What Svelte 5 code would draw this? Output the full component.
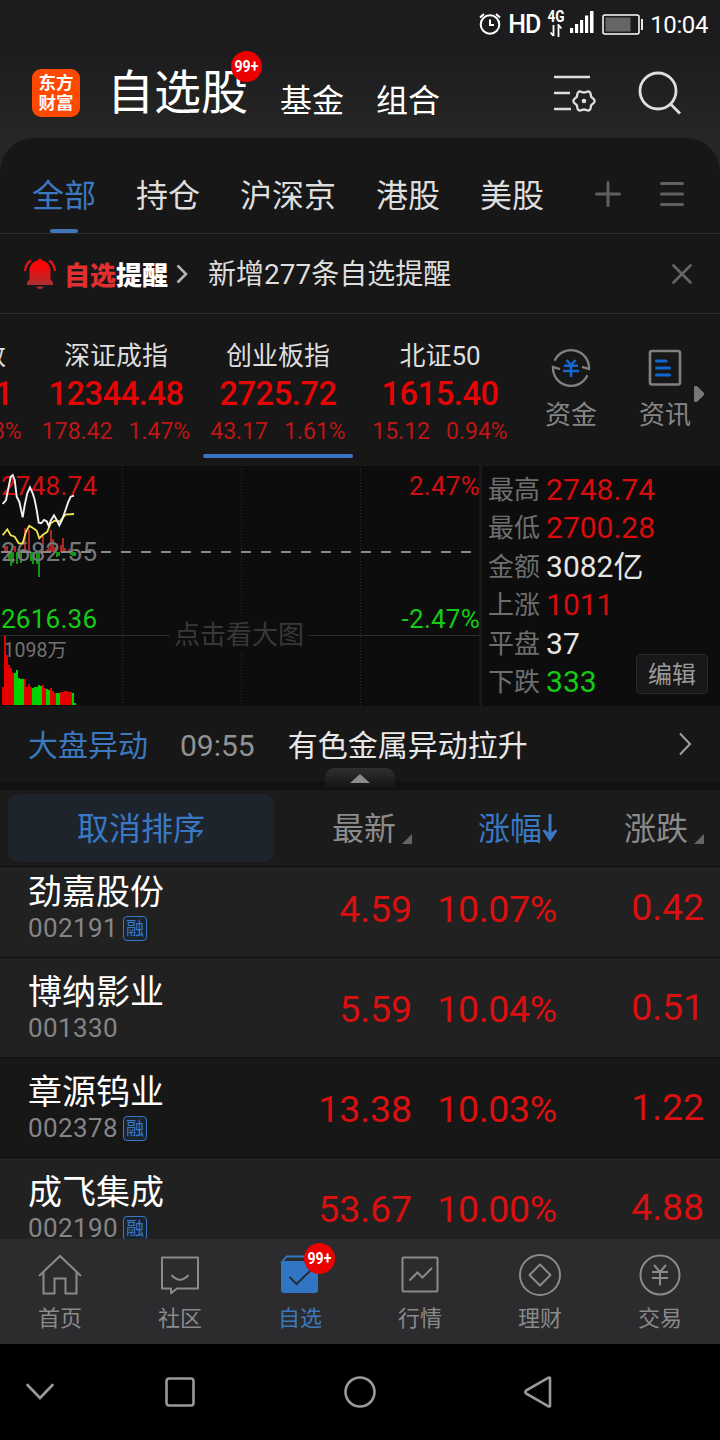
<script>
  const groups = ["全部", "持仓", "沪深京", "港股", "美股"];
  let activeGroup = "全部";

  const indices = [
    { name: "上证指数", value: "3382.41", diff: "33.17", pct: "0.98%" },
    { name: "深证成指", value: "12344.48", diff: "178.42", pct: "1.47%" },
    { name: "创业板指", value: "2725.72", diff: "43.17", pct: "1.61%", active: true },
    { name: "北证50", value: "1615.40", diff: "15.12", pct: "0.94%" },
  ];

  const stats = [
    { label: "最高", value: "2748.74", tone: "up" },
    { label: "最低", value: "2700.28", tone: "up" },
    { label: "金额", value: "3082亿", tone: "" },
    { label: "上涨", value: "1011", tone: "up" },
    { label: "平盘", value: "37", tone: "" },
    { label: "下跌", value: "333", tone: "down" },
  ];

  const stocks = [
    { name: "劲嘉股份", code: "002191", margin: true, price: "4.59", pct: "10.07%", diff: "0.42" },
    { name: "博纳影业", code: "001330", margin: false, price: "5.59", pct: "10.04%", diff: "0.51" },
    { name: "章源钨业", code: "002378", margin: true, price: "13.38", pct: "10.03%", diff: "1.22", dark: true },
    { name: "成飞集成", code: "002190", margin: true, price: "53.67", pct: "10.00%", diff: "4.88" },
  ];

  const tabs = [
    { id: "home", label: "首页" },
    { id: "community", label: "社区" },
    { id: "watch", label: "自选" },
    { id: "market", label: "行情" },
    { id: "wealth", label: "理财" },
    { id: "trade", label: "交易" },
  ];
  let activeTab = "watch";

  // six-lobed gear outline
  const gear = Array.from({ length: 72 }, (_, i) => {
    const a = (i * Math.PI) / 36;
    const r = 9.5 + 1.1 * Math.cos(6 * a);
    return `${(31 + r * Math.cos(a)).toFixed(2)},${(30 + r * Math.sin(a)).toFixed(2)}`;
  }).join(" ");

  // runs of [colour, heights...], one bar every 2px
  const volumeRuns = [
    ["r", 18, 69, 50, 40, 37, 32],
    ["g", 32, 35, 27, 26, 26],
    ["r", 26, 18, 21, 18],
    ["g", 17, 18, 18, 20, 19],
    ["r", 20, 17],
    ["g", 16, 15],
    ["r", 17, 14, 12],
    ["g", 12, 12],
    ["r", 13, 13, 14, 14, 13, 13],
    ["g", 12, 2],
  ];
  const volume = volumeRuns.flatMap(([c, ...hs]) => hs.map((h) => ({ c, h })));

  // [x, height], negative goes below the zero line
  const momentum = [
    [4, 6], [6, 6], [8, -8], [10, -14], [12, -11], [14, 6], [16, -12], [20, -11],
    [24, 24], [28, 22], [30, -9], [32, -12], [36, -12], [38, -25], [42, 16],
    [46, 3], [48, 4], [50, 22], [52, 13], [54, 5], [56, -5], [58, -4], [60, 7],
    [62, 14], [64, 4], [68, 3], [70, -3], [72, -4], [74, -4],
  ];

  const priceLine =
    "2.7,38 6,34 8,24 10.7,10.7 12.7,9 14.7,14 16.7,30.7 19.3,35.7 22.7,51.3 24.7,39 27.3,27.3 30,21.3 32.7,27.3 34.7,34 36.7,44 38.7,56.7 41.3,57.3 44,54 46.7,55.3 48.7,60 50.7,54.7 54,49.3 56.7,54 59.3,59.3 62,54 65.3,44.7 68,36.7 70.7,30.7 74,29.7";
  const avgLine =
    "2.7,69.3 7.3,63.3 10.7,69.3 14.7,70.7 18.7,77.3 22.7,77.3 26,65.7 29.3,59.7 33.3,62.3 36.7,64.7 39.3,72.3 42.7,69 47.3,65.7 50.7,57.3 54.7,54.7 60,55.3 65.3,48.7 74,48";
</script>

<div class="phone">
  <div class="top">
    <div class="status">
      <svg width="24" height="24" viewBox="0 0 24 24" fill="none" stroke="#fff" stroke-width="2">
        <circle cx="12" cy="12.5" r="9.3" />
        <path d="M12 7.5v5.5h4M2 5.5l4-3.5M22 5.5l-4-3.5" />
      </svg>
      <span class="hd">HD</span>
      <div class="net">
        <span>4G</span>
        <svg width="14" height="13" viewBox="0 0 14 13" fill="none" stroke="#fff" stroke-width="1.8">
          <path d="M4.5 1v11M4.5 12l-3-3.5M9.5 13V1l3 3.5" />
        </svg>
      </div>
      <svg class="signal" width="24" height="22" viewBox="0 0 24 22" fill="#fff">
        <path d="M0 17h3.2v5H0zM5 13h3.2v9H5zM10 9h3.2v13H10zM15 4.500h3.200V22H15zM20 0h3.500v22H20z" />
      </svg>
      <svg class="battery" width="42" height="22" viewBox="0 0 42 22">
        <rect x="1" y="1" width="36" height="19" rx="2" fill="none" stroke="#fff" stroke-width="1.5" />
        <rect x="3.500" y="3.500" width="25" height="14" fill="#666" />
        <path d="M40 5v11" stroke="#fff" stroke-width="1.800" />
      </svg>
      <span class="clock">10:04</span>
    </div>

    <header>
      <div class="logo"><span>东方</span><span>财富</span></div>
      <h1>自选股<span class="count"><i>99+</i></span></h1>
      <span class="link">基金</span>
      <span class="link">组合</span>
      <svg class="manage" width="44" height="44" viewBox="0 0 44 44" fill="none" stroke="#dedede" stroke-width="2.6">
        <path d="M1 6h36M1 22h16M1 38h17" />
        <polygon points={gear} stroke-width="2.3" />
        <circle cx="31" cy="30" r="2.300" fill="#dedede" stroke="none" />
      </svg>
      <svg class="search" width="46" height="46" viewBox="0 0 46 46" fill="none" stroke="#dedede" stroke-width="2.800">
        <circle cx="21" cy="21" r="18" />
        <path d="M33.500 34l9.500 9.500" />
      </svg>
    </header>
  </div>

  <div class="groups-wrap">
    <nav class="groups">
      {#each groups as group}
        <span class="group" class:active={group === activeGroup}>{group}</span>
      {/each}
      <svg class="plus" width="26" height="26" viewBox="0 0 26 26" stroke="#606060" stroke-width="3" stroke-linecap="round">
        <path d="M13 1.500v23M1.500 13h23" />
      </svg>
      <svg class="menu" width="24" height="26" viewBox="0 0 24 26" stroke="#606060" stroke-width="3" stroke-linecap="round">
        <path d="M1.500 2.500h21M1.500 13h21M1.500 23.500h21" />
      </svg>
    </nav>
  </div>

  <div class="notice">
    <svg width="34" height="32" viewBox="0 0 34 32">
      <defs>
        <linearGradient id="bell" x1="0" y1="0" x2="0" y2="1">
          <stop offset="0.3" stop-color="#f90808" />
          <stop offset="1" stop-color="#a93030" />
        </linearGradient>
      </defs>
      <path fill="url(#bell)" d="M17 1c1.500 0 2.200.6 2.500 1.600C24.500 3.700 27.500 8 27.500 13v8l2.500 3.500V27H4v-2.500L6.500 21v-8c0-5 3-9.300 8-10.400C14.800 1.600 15.500 1 17 1z" />
      <path fill="#a93030" d="M13.500 28.500h7c-.5 1.700-1.700 2.500-3.500 2.500s-3-.8-3.500-2.500z" />
      <path fill="none" stroke="#e81212" stroke-width="2.200" d="M2 13c.3-4.500 2-8 6-10.500M32 13c-.3-4.500-2-8-6-10.500" />
    </svg>
    <b><em>自选</em>提醒</b>
    <svg class="go" width="12" height="20" viewBox="0 0 12 20" fill="none" stroke="#b5b5b5" stroke-width="2.500">
      <path d="M1.500 1.500L10 10l-8.500 8.500" />
    </svg>
    <span>新增277条自选提醒</span>
    <svg class="close" width="20" height="20" viewBox="0 0 20 20" stroke="#666" stroke-width="2.600" stroke-linecap="round">
      <path d="M1.500 1.500l17 17M18.500 1.500l-17 17" />
    </svg>
  </div>

  <section class="board">
    <div class="indices">
      {#each indices as item}
        <div class="index" class:active={item.active}>
          <span class="name">{item.name}</span>
          <span class="value">{item.value}</span>
          <span class="change"><span>{item.diff}</span><span>{item.pct}</span></span>
        </div>
      {/each}
    </div>
    <div class="tool">
      <svg width="40" height="40" viewBox="0 0 40 40" fill="none" stroke="#808080" stroke-width="2.300">
        <path d="M3.600 12.700A18 18 0 0 1 38 21L31 18.800" />
        <path d="M36.400 27.300A18 18 0 0 1 2 19L9 21.200" />
        <path stroke="#1169d0" stroke-width="2.600" d="M15.500 12l4.500 5 4.500-5M13 17.800h14M12 23h16M20 17v12" />
      </svg>
      <span>资金</span>
    </div>
    <div class="tool">
      <svg width="40" height="40" viewBox="0 0 40 40" fill="none" stroke="#808080" stroke-width="2.600">
        <rect x="5" y="3" width="30" height="33.500" rx="2" />
        <path stroke="#1169d0" stroke-width="3" stroke-linecap="round" d="M11.500 13h9.500M11.500 20h13M11.500 27h13" />
      </svg>
      <span>资讯</span>
    </div>
    <svg class="more" width="10" height="16" viewBox="0 0 10 16"><path fill="#777" d="M0 1q0-1 1-1h2l7 7v2l-7 7H1q-1 0-1-1z" /></svg>
  </section>

  <section class="quote">
    <svg class="chart" width="479" height="240" viewBox="0 0 479 240">
      <g class="grid">
        <path d="M122.500 2v238M241.500 2v150M241.500 186v54M360.500 2v238" stroke-dasharray="1 2" />
        <path d="M1 169.500h169M308 169.500h171" />
      </g>
      {#each momentum as [x, h]}
        <rect x={x} y={h > 0 ? 86 - h : 86} width="2" height={Math.abs(h)} fill={h > 0 ? "#a82828" : "#159415"} />
      {/each}
      <g class="figures">
        <text class="up" x="1" y="29">2748.74</text>
        <text class="mid" x="1" y="95">2682.55</text>
        <text class="down" x="1" y="162">2616.36</text>
        <text class="up" x="480" y="29" text-anchor="end">2.47%</text>
        <text class="down" x="480" y="162" text-anchor="end">-2.47%</text>
        <text class="vol" x="3.500" y="190.500">1098万</text>
        <text class="hint" x="174" y="178">点击看大图</text>
      </g>
      <path d="M1 86h472" stroke="#8a8a8a" stroke-width="2" stroke-dasharray="10 10" />
      {#each volume as bar, i}
        <rect x={2 + i * 2} y={239 - bar.h} width="2" height={bar.h} fill={bar.c === "r" ? "#e60000" : "#00d400"} />
      {/each}
      <polyline points={avgLine} fill="none" stroke="#f2e34c" stroke-width="1.800" />
      <polyline points={priceLine} fill="none" stroke="#f2f2f2" stroke-width="1.900" />
    </svg>
    <div class="stats">
      {#each stats as row}
        <div class="stat"><span>{row.label}</span><strong class={row.tone}>{row.value}</strong></div>
      {/each}
      <button class="edit">编辑</button>
    </div>
  </section>

  <div class="flash">
    <span class="tag">大盘异动</span>
    <span class="time">09:55</span>
    <span class="text">有色金属异动拉升</span>
    <svg width="14" height="24" viewBox="0 0 14 24" fill="none" stroke="#a0a0a0" stroke-width="2">
      <path d="M2 1.500L12 12 2 22.500" />
    </svg>
    <div class="handle">
      <svg width="20" height="9" viewBox="0 0 20 9"><path fill="#8c8c8c" d="M10 0l10 9H0z" /></svg>
    </div>
  </div>

  <div class="sort">
    <span class="cancel">取消排序</span>
    <span class="col c1">最新<i class="corner"></i></span>
    <span class="col c2">涨幅<svg width="16" height="28" viewBox="0 0 16 28"><path fill="none" stroke="#3a78c3" stroke-width="3" d="M8 0v24" /><path fill="#3a78c3" d="M0.500 16.500l2-1 5.500 4 5.500-4 2 1L8 28z" /></svg></span>
    <span class="col c3">涨跌<i class="corner"></i></span>
  </div>

  <div class="list">
    {#each stocks as stock}
      <div class="stock" class:dark={stock.dark}>
        <div class="who">
          <span class="title">{stock.name}</span>
          <span class="code">{stock.code}{#if stock.margin}<i>融</i>{/if}</span>
        </div>
        <span class="num price">{stock.price}</span>
        <span class="num pct">{stock.pct}</span>
        <span class="num diff">{stock.diff}</span>
      </div>
    {/each}
  </div>

  <nav class="tabbar">
    {#each tabs as tab}
      <div class="tab" class:active={tab.id === activeTab}>
        <svg width="46" height="44" viewBox="0 0 46 44" fill="none" stroke="#8a8a8a" stroke-width="2">
          {#if tab.id === "home"}
            <path d="M2 23L23 3l21 20M6.500 19v21.500h11V25.500h11v15h11V19" />
          {:else if tab.id === "community"}
            <path d="M5 4.500h36v31H20l-6 4.800v-4.800H5zM14.500 22q8.500 9.500 17 0" stroke-linejoin="round" />
          {:else if tab.id === "watch"}
            <path d="M9.500 3.500h26L39 9H5z" stroke="#3176c2" stroke-width="1.800" />
            <rect x="4" y="8.500" width="37" height="31.500" rx="3" fill="#3176c2" stroke="none" />
            <path d="M12.500 24l7 7L34 17" stroke="#252d38" />
          {:else if tab.id === "market"}
            <rect x="5.500" y="4.500" width="35" height="34" rx="1" />
            <path d="M12.500 27.500l8-8 5 5 9.500-9.500" />
          {:else if tab.id === "wealth"}
            <circle cx="23" cy="22" r="20" />
            <path d="M23 11.500L33.500 22 23 32.500 12.500 22z" stroke-linejoin="round" />
          {:else}
            <circle cx="23" cy="22" r="19.500" />
            <path d="M17 12l6 7 6-7M15 19h16M15 25h16M23 19v13.500" />
          {/if}
        </svg>
        <span>{tab.label}</span>
        {#if tab.id === "watch"}<span class="count"><i>99+</i></span>{/if}
      </div>
    {/each}
  </nav>

  <div class="keys">
    <svg width="28" height="18" viewBox="0 0 28 18"><path d="M1.500 2L14 15 26.500 2" /></svg>
    <svg width="30" height="30" viewBox="0 0 30 30"><rect x="1.500" y="1.500" width="27" height="27" rx="2.500" /></svg>
    <svg width="32" height="32" viewBox="0 0 32 32"><circle cx="16" cy="16" r="14.500" /></svg>
    <svg width="28" height="32" viewBox="0 0 28 32"><path d="M26 2.200v27.600q-.5 1-1.500.5L2 17.500q-1.300-1.500 0-3L24.500 1.700q1-.5 1.500.5z" /></svg>
  </div>
</div>

<style>
  :global(body) {
    background: #000;
  }

  .phone {
    width: 720px;
    height: 1440px;
    display: flex;
    flex-direction: column;
    overflow: hidden;
    background: #171717;
    color: #dedede;
    font-family: Roboto, "Noto Sans CJK SC", sans-serif;
  }

  .phone > * {
    flex: none;
  }

  svg {
    display: block;
    flex: none;
  }

  i,
  em {
    font-style: normal;
  }

  .up {
    color: #d90b0b;
    fill: #d20f0f;
  }

  .down {
    color: #15cc15;
    fill: #15cc15;
  }

  .top {
    height: 138px;
    background: linear-gradient(#1c1c1e 35%, #262626);
  }

  .status {
    height: 48px;
    display: flex;
    align-items: center;
    justify-content: flex-end;
    padding-right: 12px;
    color: #fff;
    font-size: 24px;
    line-height: 50px;
  }

  .hd {
    margin: 1px 0 0 6px;
    font-size: 25px;
    font-weight: 500;
    letter-spacing: -1px;
  }

  .net {
    width: 18px;
    margin: 0 5px 0 7px;
    padding-bottom: 2px;
    display: flex;
    flex-direction: column;
    align-items: center;
  }

  .net span {
    font-size: 16px;
    line-height: 14px;
    font-weight: 700;
    transform: scaleX(0.85);
  }

  .signal {
    margin-bottom: 4px;
  }

  .battery {
    margin: 2px 0 0 8px;
  }

  .clock {
    margin: 1px 0 0 6px;
    letter-spacing: -0.4px;
  }

  header {
    height: 90px;
    display: flex;
    align-items: center;
    padding-left: 32px;
  }

  .logo {
    width: 48px;
    height: 48px;
    display: flex;
    flex-direction: column;
    justify-content: center;
    align-items: center;
    border-radius: 9px;
    background: #ff4800;
    color: #fff;
    font-size: 17.5px;
    font-weight: 700;
    line-height: 20px;
  }

  h1 {
    position: relative;
    margin: 0 32px 0 27px;
    color: #fff;
    font-size: 47px;
    font-weight: 400;
    line-height: 90px;
  }

  .count {
    position: absolute;
    top: 3px;
    right: -14px;
    width: 31px;
    height: 31px;
    border-radius: 50%;
    background: #ec0000;
    color: #fff;
    text-align: center;
    font-size: 17px;
    font-weight: 700;
    line-height: 30px;
  }

  .count i {
    display: inline-block;
    margin: 0 -4px;
    transform: scaleX(0.83);
  }

  .link {
    margin: 15px 32px 0 0;
    color: #fff;
    font-size: 32px;
    line-height: 40px;
  }

  .manage {
    margin-left: 81px;
  }

  .search {
    margin-left: 40px;
  }

  .groups-wrap {
    height: 96px;
    background: #262626;
  }

  .groups {
    height: 95px;
    display: flex;
    align-items: center;
    padding: 0 36px 0 32px;
    border-bottom: 1px solid #2e2e2e;
    border-radius: 34px 34px 0 0;
    background: #171717;
    font-size: 32px;
  }

  .group {
    position: relative;
    margin-right: 40px;
    padding-top: 18px;
    height: 77px;
    line-height: 80px;
  }

  .group.active {
    color: #3b78bf;
  }

  .group.active::after {
    content: "";
    position: absolute;
    left: 18px;
    bottom: 0;
    width: 28px;
    height: 4px;
    border-radius: 2px;
    background: #4177b8;
  }

  .plus {
    margin: 16px 0 0 11px;
  }

  .menu {
    margin: 16px 0 0 auto;
  }

  .notice {
    height: 79px;
    display: flex;
    align-items: center;
    padding: 0 28px 0 23px;
    border-bottom: 1px solid #2e2e2e;
    font-size: 28px;
    line-height: 60px;
  }

  .notice span {
    padding-top: 3px;
  }

  .notice b {
    margin-left: 7px;
    padding-top: 4px;
    color: #fff;
    font-size: 26px;
    font-weight: 900;
  }

  .notice b em {
    color: #e03030;
  }

  .go {
    margin: 0 20px 0 8px;
  }

  .close {
    margin-left: auto;
  }

  .board {
    position: relative;
    height: 152px;
    display: flex;
  }

  .indices {
    width: 521px;
    margin-right: 3px;
    display: flex;
    justify-content: flex-end;
    overflow: hidden;
  }

  .index {
    flex: 0 0 162px;
    position: relative;
    display: flex;
    flex-direction: column;
    align-items: center;
    padding-top: 22px;
    white-space: nowrap;
  }

  .index.active::after {
    content: "";
    position: absolute;
    left: 6px;
    bottom: 8px;
    width: 150px;
    height: 4px;
    border-radius: 2px;
    background: #3976c2;
  }

  .name {
    font-size: 26px;
    line-height: 40px;
  }

  .value {
    color: #e60505;
    font-size: 32.5px;
    font-weight: 500;
    line-height: 37px;
    letter-spacing: -0.4px;
  }

  .change {
    display: flex;
    gap: 16px;
    color: #bd1616;
    font-size: 23px;
    line-height: 37px;
  }

  .tool {
    width: 94px;
    display: flex;
    flex-direction: column;
    align-items: center;
    padding-top: 34px;
    color: #858585;
    font-size: 26px;
    line-height: 54px;
  }

  .more {
    position: absolute;
    right: 16px;
    top: 72px;
  }

  .quote {
    height: 240px;
    display: flex;
    background: #0d0d0d;
  }

  .chart {
    border-right: 3px solid #181818;
  }

  .grid path {
    fill: none;
    stroke: #2c2c2c;
  }

  .figures {
    font-size: 26px;
    letter-spacing: 0.25px;
  }

  .figures .mid {
    fill: #777;
  }

  .figures .vol {
    fill: #727272;
    font-size: 19.5px;
    letter-spacing: 0;
  }

  .figures .hint {
    fill: #383838;
    letter-spacing: 0;
  }

  .stats {
    flex: 1;
    position: relative;
    padding: 5px 0 0 6px;
  }

  .stat {
    display: flex;
    gap: 6px;
    height: 38.4px;
    line-height: 38.4px;
    color: #6e6e6e;
    font-size: 26px;
  }

  .stat strong {
    font-size: 30px;
    font-weight: 400;
  }

  .stat strong:not(.up):not(.down) {
    color: #e6e6e6;
  }

  .edit {
    position: absolute;
    right: 12px;
    bottom: 12px;
    width: 72px;
    height: 40px;
    padding: 1px 0 0;
    border: 1px solid #292929;
    border-radius: 4px;
    background: #181818;
    color: #9b9b9b;
    font: inherit;
    font-size: 24px;
    line-height: 38px;
  }

  .flash {
    position: relative;
    height: 76px;
    display: flex;
    align-items: center;
    padding: 0 28px;
    border-bottom: 8px solid #111;
    font-size: 30px;
    line-height: 60px;
  }

  .flash span {
    padding-top: 3px;
  }

  .tag {
    color: #3b78bf;
  }

  .time {
    margin: 0 33px 0 32px;
    color: #929292;
  }

  .text {
    color: #e8e8e8;
  }

  .flash > svg {
    margin-left: auto;
  }

  .handle {
    position: absolute;
    left: 325px;
    top: 62px;
    width: 70px;
    height: 20px;
    display: flex;
    align-items: center;
    justify-content: center;
    border-radius: 9px 9px 0 0;
    background: linear-gradient(#303030, #131313);
  }

  .sort {
    height: 76px;
    display: flex;
    align-items: center;
    padding: 0 16px 0 8px;
    border-bottom: 1px solid #0e0e0e;
    background: #1b1b1b;
    color: #8b8b8b;
    font-size: 32px;
    line-height: 60px;
  }

  .cancel {
    width: 266px;
    height: 68px;
    border-radius: 10px;
    background: #1d242c;
    color: #3a78c3;
    text-align: center;
    line-height: 70px;
  }

  .col {
    display: flex;
    align-items: center;
    justify-content: flex-end;
    padding-top: 2px;
  }

  .c1 {
    width: 138px;
  }

  .c2 {
    width: 146px;
    color: #3a78c3;
  }

  .c2 svg {
    margin-bottom: 2px;
  }

  .c3 {
    width: 146px;
  }

  .corner {
    margin: 20px 0 0 6px;
    border: 5px solid transparent;
    border-right-color: #646464;
    border-bottom-color: #646464;
  }

  .list {
    height: 372px;
    display: flex;
    flex-direction: column;
    justify-content: flex-start;
    overflow: hidden;
  }

  .stock {
    flex: none;
    height: 99px;
    display: flex;
    border-bottom: 1px solid #0e0e0e;
    background: #212121;
  }

  /* list is scrolled a little under the sort bar */
  .stock:first-child {
    margin-top: -9px;
  }

  .stock.dark {
    background: #171717;
  }

  .who {
    width: 232px;
    padding: 14px 0 0 28px;
    display: flex;
    flex-direction: column;
  }

  .title {
    color: #fff;
    font-size: 34px;
    line-height: 41px;
    height: 40px;
  }

  .code {
    display: flex;
    align-items: center;
    color: #858588;
    font-size: 26px;
    line-height: 32px;
    letter-spacing: 0.4px;
  }

  .code i {
    width: 22px;
    height: 23px;
    margin-left: 5px;
    border: 1px solid #3a78c3;
    border-radius: 4px;
    background: #182430;
    color: #3a78c3;
    font-size: 18px;
    line-height: 23px;
    letter-spacing: 0;
    text-align: center;
  }

  .num {
    color: #da1010;
    font-size: 37.5px;
    line-height: 102px;
    letter-spacing: -0.1px;
    text-align: right;
  }

  .price {
    width: 152px;
  }

  .pct {
    width: 145px;
    letter-spacing: -0.3px;
  }

  .diff {
    width: 147px;
    line-height: 98px;
  }

  .tabbar {
    height: 105px;
    display: grid;
    grid-template-columns: repeat(6, 1fr);
    background: #2c2c2e;
    color: #8a8a8a;
    font-size: 22px;
    line-height: 40px;
  }

  .tab {
    position: relative;
    display: flex;
    flex-direction: column;
    align-items: center;
    padding-top: 14px;
    gap: 2px;
  }

  .tab.active {
    color: #3b78bf;
  }

  .tab .count {
    right: 25px;
    top: 4px;
  }

  .keys {
    height: 96px;
    display: grid;
    grid-template-columns: 80px 200px 160px 196px 84px;
    justify-items: center;
    align-items: center;
    background: #000;
  }

  .keys svg {
    fill: none;
    stroke: #999;
    stroke-width: 2.6;
    stroke-linecap: round;
  }
</style>
